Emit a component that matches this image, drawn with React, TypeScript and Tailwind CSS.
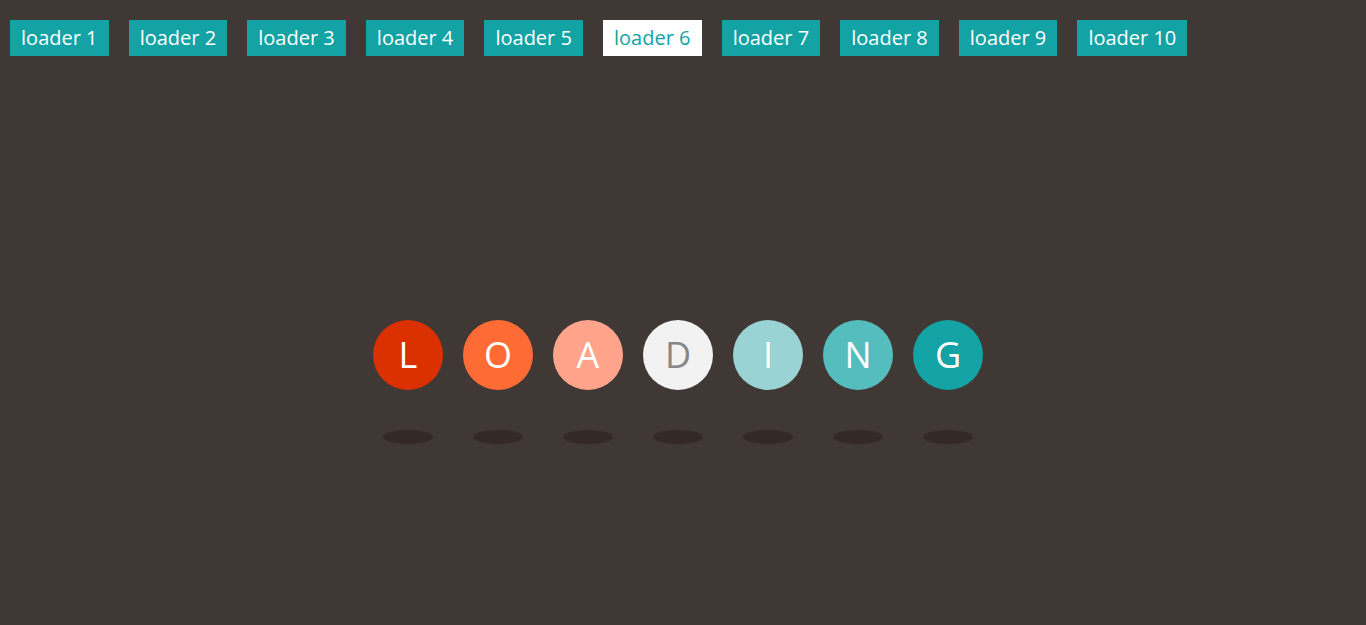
const loaders = Array.from({ length: 10 }, (_, i) => `loader ${i + 1}`);

const letters = [
  { ch: "L", bg: "bg-[#db3000]", fg: "text-white" },
  { ch: "O", bg: "bg-[#ff6b35]", fg: "text-white" },
  { ch: "A", bg: "bg-[#ffa38a]", fg: "text-white" },
  { ch: "D", bg: "bg-[#f2f2f2]", fg: "text-[#878787]" },
  { ch: "I", bg: "bg-[#9ad3d4]", fg: "text-white" },
  { ch: "N", bg: "bg-[#56bdbe]", fg: "text-white" },
  { ch: "G", bg: "bg-[#13a3a4]", fg: "text-white" },
];

export default function App() {
  return (
    <div className="h-[625px] w-full overflow-hidden bg-[#403834] font-['Open_Sans','Noto_Sans',sans-serif]">
      <nav className="flex gap-5 pl-[10px] pt-5">
        {loaders.map((label, i) => (
          <button
            key={label}
            type="button"
            className={`h-9 text-center text-[20px] leading-9 ${i === 9 ? "w-[110px]" : "w-[98.6px]"} ${
              i === 5 ? "bg-white text-[#13a3a4]" : "bg-[#13a3a4] text-white"
            }`}
          >
            {label}
          </button>
        ))}
      </nav>

      <div className="mt-[264px] flex justify-center gap-5 pr-[10px]">
        {letters.map((l) => (
          <div key={l.ch} className="flex flex-col items-center gap-10">
            <div
              className={`flex h-[70px] w-[70px] items-center justify-center rounded-full text-[36px] ${l.bg} ${l.fg}`}
            >
              {l.ch}
            </div>
            <div className="h-[14px] w-[50px] rounded-[50%] bg-[#332a27]" />
          </div>
        ))}
      </div>
    </div>
  );
}
